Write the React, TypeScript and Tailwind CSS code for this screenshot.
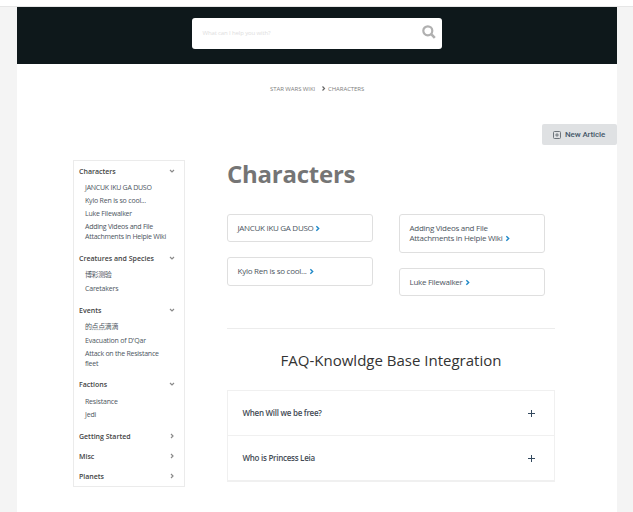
import React from "react";

type Group = { title: string; open: boolean; items: { label: string; cls: string }[]; cls: string; listCls: string };

const row = "h-[10px] tracking-[-0.2px]";
const tall = "h-5 tracking-[-0.25px]";
const cjk = "h-[11px] tracking-[-0.4px]";

const groups: Group[] = [
  {
    title: "Characters", open: true, cls: "pb-3", listCls: "pt-[6px]",
    items: [
      { label: "JANCUK IKU GA DUSO", cls: "h-[10px] tracking-[-0.25px]" },
      { label: "Kylo Ren is so cool...", cls: row },
      { label: "Luke Filewalker", cls: row },
      { label: "Adding Videos and File\nAttachments in Helpie Wiki", cls: tall },
    ],
  },
  {
    title: "Creatures and Species", open: true, cls: "pb-3", listCls: "pt-[6px]",
    items: [{ label: "博彩测验", cls: cjk }, { label: "Caretakers", cls: row }],
  },
  {
    title: "Events", open: true, cls: "pb-[11px]", listCls: "pt-[6px]",
    items: [
      { label: "的点点滴滴", cls: cjk },
      { label: "Evacuation of D'Qar", cls: row },
      { label: "Attack on the Resistance\nfleet", cls: tall },
    ],
  },
  {
    title: "Factions", open: true, cls: "pb-3", listCls: "pt-[7px]",
    items: [{ label: "Resistance", cls: row }, { label: "Jedi", cls: row }],
  },
  { title: "Getting Started", open: false, cls: "pb-[10px]", listCls: "", items: [] },
  { title: "Misc", open: false, cls: "pb-[10px]", listCls: "", items: [] },
  { title: "Planets", open: false, cls: "", listCls: "", items: [] },
];

function Chevron({ down = false, className = "" }: { down?: boolean; className?: string }) {
  return (
    <svg viewBox="0 0 6 6" className={className} fill="none" stroke="currentColor" strokeWidth="1.2">
      {down ? <path d="M1 2 3 4 5 2" /> : <path d="M2 1 4 3 2 5" />}
    </svg>
  );
}

function Sidebar() {
  return (
    <nav className="mt-[36px] h-[327px] w-[112px] shrink-0 border border-[#ebebeb] pt-[6px] pl-[5px] text-[7px] leading-[10px]">
      {groups.map((g) => (
        <div key={g.title} className={g.cls}>
          <div className="flex h-[10px] items-center justify-between pr-[9px] font-semibold text-[#444]">
            <span className="whitespace-nowrap">{g.title}</span>
            <Chevron down={g.open} className="mb-[2px] size-[6px] text-[#8a8a8a]" />
          </div>
          {g.open && (
            <ul className={`flex flex-col gap-[3px] pl-[6px] text-[#4c555e] ${g.listCls}`}>
              {g.items.map((i) => (
                <li key={i.label} className={`whitespace-pre ${i.cls}`}>{i.label}</li>
              ))}
            </ul>
          )}
        </div>
      ))}
    </nav>
  );
}

function Card({ label, className }: { label: string; className: string }) {
  return (
    <div className={`flex w-[146px] rounded-[3px] border border-[#dfdfdf] pl-[9.5px] text-[8px] leading-[10px] text-[#4c555e] ${className}`}>
      <span className="whitespace-pre">
        {label}
        <Chevron className="ml-[1px] inline-block size-[7px] align-[-1px] text-[#1e88c8]" />
      </span>
    </div>
  );
}

function Question({ label, className }: { label: string; className: string }) {
  return (
    <div className={`flex items-center justify-between pr-[19px] pl-[14.5px] text-[8px] font-semibold tracking-[-0.27px] text-[#444b55] ${className}`}>
      <span>{label}</span>
      <svg viewBox="0 0 7 7" className="size-[7px]" stroke="#34495e" strokeWidth="1" shapeRendering="crispEdges">
        <path d="M0 3.5H7M3.5 0V7" />
      </svg>
    </div>
  );
}

export default function App() {
  return (
    <div className="h-[512px] w-[633px] overflow-hidden bg-[#f4f4f4] font-['Open_Sans','Noto_Sans_CJK_SC',sans-serif]">
      <div className="h-[7px] border-b border-[#e6e6e6] bg-white" />
      <div className="ml-[17px] h-[505px] w-[600px] bg-white">
        <header className="h-[57px] bg-[#0e181b] pt-[11px]">
          <div className="ml-[175px] flex h-[31px] w-[250px] justify-between rounded-[3px] bg-white pr-[6px] pl-[10.5px]">
            <span className="pt-[10px] text-[6px] leading-[10px] tracking-[-0.13px] text-[#dedede]">What can I help you with?</span>
            <svg viewBox="0 0 14 14" className="mt-[7px] size-[14px]" fill="none" stroke="#b0b0b0">
              <circle cx="5.8" cy="5.8" r="4.5" strokeWidth="2.2" />
              <path d="m9.2 9.2 3.6 3.6" strokeWidth="2.6" />
            </svg>
          </div>
        </header>
        <div className="flex h-[60px] items-start pt-[20px] pl-[253px] text-[6px] leading-[10px] tracking-[-0.07px] text-[#808080]">
          <span className="w-[51px] whitespace-nowrap">STAR WARS WIKI</span>
          <svg viewBox="0 0 5 5" className="mt-[2px] mr-[2px] size-[5px]" fill="none" stroke="#666" strokeWidth="1.2">
            <path d="M1.5.5 3.5 2.5 1.5 4.5" />
          </svg>
          <span className="whitespace-nowrap">CHARACTERS</span>
        </div>
        <div className="ml-auto flex h-[21px] w-[75px] items-center rounded-[2px] bg-[#dfe1e3] pl-[11px]">
          <svg viewBox="0 0 8 8" className="size-[8px]" fill="none" stroke="#6d747b">
            <rect x=".5" y=".5" width="7" height="7" rx="1" />
            <path d="M2.2 4H5.8M4 2.2V5.8" />
          </svg>
          <span className="mt-[1px] ml-[4px] font-[Roboto,sans-serif] text-[8px] font-medium tracking-[-0.12px] whitespace-nowrap text-[#46586a]">New Article</span>
        </div>
        <div className="-mt-[21px] flex pl-[56px]">
          <Sidebar />
          <main className="ml-[42px] w-[328px] pt-[33px]">
            <h1 className="h-[57px] text-[24px] leading-[34px] font-bold tracking-[-0.25px] text-[#757575]">Characters</h1>
            <div className="flex h-[115px] justify-between border-b border-[#ececec] pr-[10px]">
              <div className="flex flex-col gap-[15px]">
                <Card label="JANCUK IKU GA DUSO" className="h-[28px] pt-[8px] tracking-[-0.3px]" />
                <Card label="Kylo Ren is so cool..." className="h-[29px] pt-[8px] tracking-[-0.25px]" />
              </div>
              <div className="flex flex-col gap-[15px]">
                <Card label={"Adding Videos and File\nAttachments in Helpie Wiki"} className="h-[39px] pt-[8px] tracking-[-0.27px]" />
                <Card label="Luke Filewalker" className="h-[28px] pt-[8px] tracking-[-0.27px]" />
              </div>
            </div>
            <h2 className="h-[61px] pt-[20px] text-center text-[15px] leading-[22px] whitespace-nowrap text-[#333]">FAQ-Knowldge Base Integration</h2>
            <section className="h-[92px] border border-b-2 border-[#f0f0f0]">
              <Question label="When Will we be free?" className="h-[45px] border-b border-[#f0f0f0]" />
              <Question label="Who is Princess Leia" className="h-[44px]" />
            </section>
          </main>
        </div>
      </div>
    </div>
  );
}
